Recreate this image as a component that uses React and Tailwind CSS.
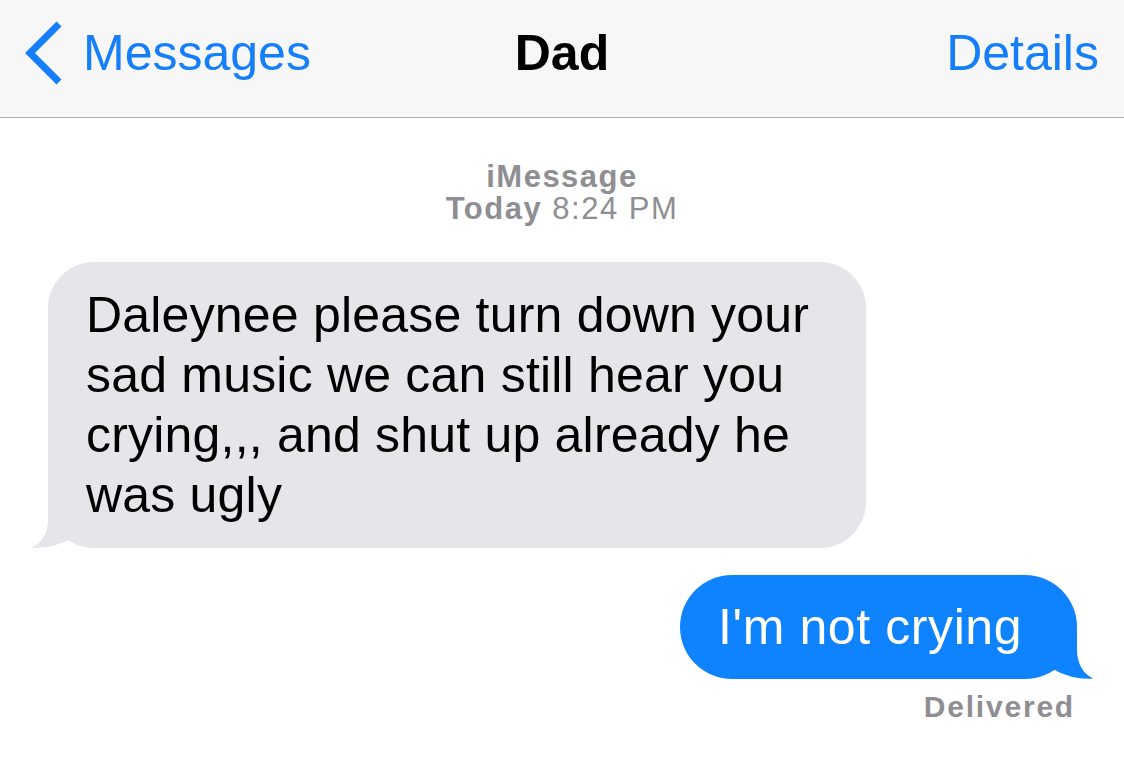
import React from "react";

export default function App() {
  return (
    <div
      className="w-[1124px] h-[759px] bg-white overflow-hidden flex flex-col"
      style={{ fontFamily: '"Liberation Sans", Arial, sans-serif' }}
    >
      {/* Header */}
      <div className="h-[118px] box-border border-b border-[#b2b2b2] bg-[#f7f7f7] grid grid-cols-3 items-center pb-[12px]">
        <div className="flex items-center pl-[22px] gap-[19px]">
          <svg width="42" height="64" viewBox="0 0 42 64" className="shrink-0">
            <polyline
              points="37,3 8,32 37,61"
              fill="none"
              stroke="#157efb"
              strokeWidth="7"
              strokeLinecap="butt"
              strokeLinejoin="miter"
            />
          </svg>
          <span className="text-[50px] leading-[60px] text-[#157efb]">Messages</span>
        </div>
        <div className="flex justify-center">
          <span className="text-[50px] leading-[60px] font-bold text-black">Dad</span>
        </div>
        <div className="flex justify-end pr-[25px]">
          <span className="text-[50px] leading-[60px] text-[#157efb]">Details</span>
        </div>
      </div>

      {/* Timestamp */}
      <div className="mt-[43px] text-center text-[31px] leading-[32px] tracking-[1.5px] text-[#8e8e93]">
        <div className="font-bold">iMessage</div>
        <div>
          <span className="font-bold">Today</span> 8:24 PM
        </div>
      </div>

      {/* Incoming bubble */}
      <div className="relative self-start ml-[48px] mt-[37px] w-[818px]">
        <svg
          width="50"
          height="50"
          viewBox="0 0 50 50"
          className="absolute left-[-20px] bottom-0"
        >
          <path
            d="M20,0 L20,22 C20,36 13,45 4,49.5 C16,50.5 30,48 44,40 L44,0 Z"
            fill="#e5e5ea"
          />
        </svg>
        <div className="relative bg-[#e5e5ea] rounded-[46px] pl-[38px] pr-[30px] pt-[23px] pb-[23px] text-[50px] leading-[60px] tracking-[0.2px] text-black">
          Daleynee please turn down your
          <br />
          sad music we can still hear you
          <br />
          crying,,, and shut up already he
          <br />
          was ugly
        </div>
      </div>

      {/* Outgoing bubble */}
      <div className="relative self-end mr-[47px] mt-[27px]">
        <svg
          width="50"
          height="50"
          viewBox="0 0 50 50"
          className="absolute right-[-20px] bottom-0"
        >
          <path
            d="M30,0 L30,20 C30,36 37,45 46,49.5 C34,50.5 20,48 6,40 L6,0 Z"
            fill="#0f83fe"
          />
        </svg>
        <div className="relative bg-[#0f83fe] rounded-[52px] w-[397px] h-[104px] pl-[38px] pt-[22px] text-[50px] leading-[60px] tracking-[0.6px] text-white whitespace-nowrap">
          I'm not crying
        </div>
      </div>

      {/* Delivered */}
      <div className="self-end mr-[49px] mt-[10px] text-[30px] leading-[36px] font-bold tracking-[1.8px] text-[#8e8e93]">
        Delivered
      </div>
    </div>
  );
}
